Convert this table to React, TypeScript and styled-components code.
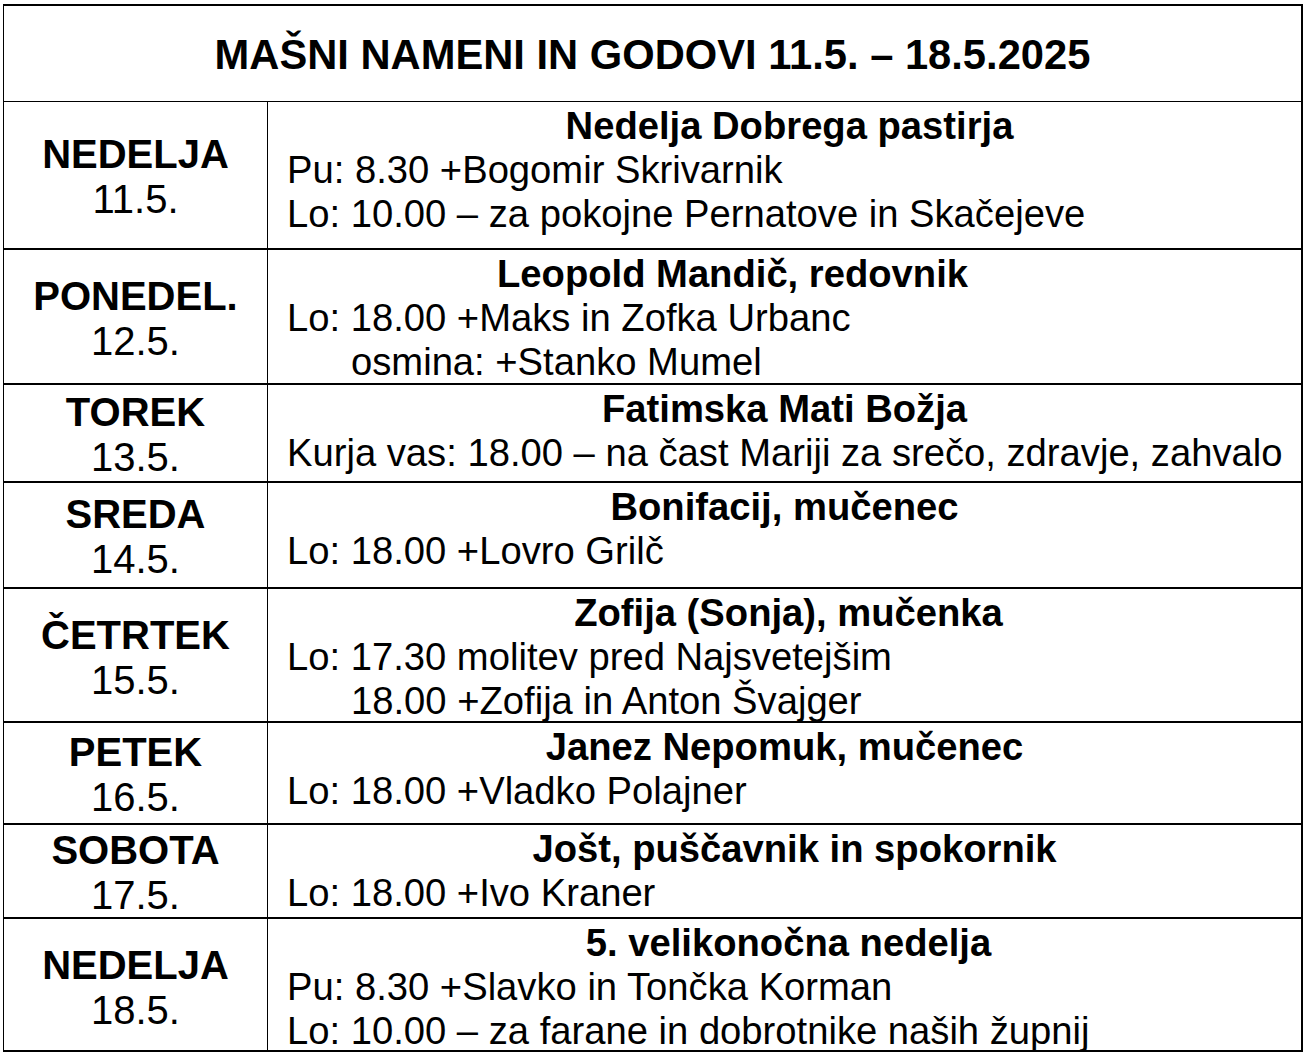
import React from 'react';
import styled, { createGlobalStyle } from 'styled-components';

const GlobalStyle = createGlobalStyle`
	html, body {
		margin: 0;
		padding: 0;
		background: #ffffff;
	}
	body {
		font-family: 'Liberation Sans', Arial, sans-serif;
		color: #000000;
	}
`;

const Page = styled.div`
	padding: 4px 0 0 3px;
`;

const Sheet = styled.div`
	width: 1300px;
	box-sizing: border-box;
	border-top: 2px solid #000;
	border-left: 1px solid #000;
	border-right: 2px solid #000;
`;

const Title = styled.h1`
	margin: 0;
	height: 96px;
	box-sizing: border-box;
	border-bottom: 1px solid #000;
	display: flex;
	align-items: center;
	justify-content: center;
	font-size: 41.7px;
	font-weight: bold;
	padding-top: 2px;
`;

const Row = styled.div<{ $height: number }>`
	display: grid;
	grid-template-columns: 264px 1fr;
	height: ${(p) => p.$height}px;
	box-sizing: border-box;
	border-bottom: 2px solid #000;
`;

const DayCell = styled.div`
	border-right: 1px solid #000;
	display: flex;
	flex-direction: column;
	align-items: center;
	justify-content: center;
	font-size: 40px;
	line-height: 45px;
	padding-top: 3px;
`;

const DayName = styled.div`
	font-weight: bold;
`;

const DayDate = styled.div``;

const InfoCell = styled.div`
	padding: 2px 0 0 19px;
	font-size: 38.2px;
	line-height: 44px;
	white-space: nowrap;
`;

// shift nudges the centred feast title, as the stray spaces in the printed sheet do
const Feast = styled.div<{ $shift: number }>`
	font-weight: bold;
	text-align: center;
	margin-left: -19px;
	padding-left: ${(p) => Math.max(0, p.$shift * 2)}px;
	padding-right: ${(p) => Math.max(0, -p.$shift * 2)}px;
`;

const Line = styled.div<{ $indent?: boolean }>`
	padding-left: ${(p) => (p.$indent ? '64px' : '0')};
`;

type Mass = { text: string; indent?: boolean };

type Day = {
	name: string;
	date: string;
	feast: string;
	shift: number;
	masses: Mass[];
	height: number;
};

const days: Day[] = [
	{
		name: 'NEDELJA',
		date: '11.5.',
		feast: 'Nedelja Dobrega pastirja',
		shift: 5,
		masses: [
			{ text: 'Pu: 8.30 +Bogomir Skrivarnik' },
			{ text: 'Lo: 10.00 – za pokojne Pernatove in Skačejeve' }
		],
		height: 148
	},
	{
		name: 'PONEDEL.',
		date: '12.5.',
		feast: 'Leopold Mandič, redovnik',
		shift: -52,
		masses: [
			{ text: 'Lo: 18.00 +Maks in Zofka Urbanc' },
			{ text: 'osmina: +Stanko Mumel', indent: true }
		],
		height: 135
	},
	{
		name: 'TOREK',
		date: '13.5.',
		feast: 'Fatimska Mati Božja',
		shift: 0,
		masses: [{ text: 'Kurja vas: 18.00 – na čast Mariji za srečo, zdravje, zahvalo' }],
		height: 98
	},
	{
		name: 'SREDA',
		date: '14.5.',
		feast: 'Bonifacij, mučenec',
		shift: 0,
		masses: [{ text: 'Lo: 18.00 +Lovro Grilč' }],
		height: 106
	},
	{
		name: 'ČETRTEK',
		date: '15.5.',
		feast: 'Zofija (Sonja), mučenka',
		shift: 4,
		masses: [
			{ text: 'Lo: 17.30 molitev pred Najsvetejšim' },
			{ text: '18.00 +Zofija in Anton Švajger', indent: true }
		],
		height: 134
	},
	{
		name: 'PETEK',
		date: '16.5.',
		feast: 'Janez Nepomuk, mučenec',
		shift: 0,
		masses: [{ text: 'Lo: 18.00 +Vladko Polajner' }],
		height: 102
	},
	{
		name: 'SOBOTA',
		date: '17.5.',
		feast: 'Jošt, puščavnik in spokornik',
		shift: 10,
		masses: [{ text: 'Lo: 18.00 +Ivo Kraner' }],
		height: 94
	},
	{
		name: 'NEDELJA',
		date: '18.5.',
		feast: '5. velikonočna nedelja',
		shift: 4,
		masses: [
			{ text: 'Pu: 8.30 +Slavko in Tončka Korman' },
			{ text: 'Lo: 10.00 – za farane in dobrotnike naših župnij' }
		],
		height: 133
	}
];

const App: React.FC = () => {
	return (
		<>
			<GlobalStyle />
			<Page>
				<Sheet>
					<Title>MAŠNI NAMENI IN GODOVI 11.5. – 18.5.2025</Title>
					{days.map((day) => (
						<Row key={day.date} $height={day.height}>
							<DayCell>
								<DayName>{day.name}</DayName>
								<DayDate>{day.date}</DayDate>
							</DayCell>
							<InfoCell>
								<Feast $shift={day.shift}>{day.feast}</Feast>
								{day.masses.map((m) => (
									<Line key={m.text} $indent={m.indent}>
										{m.text}
									</Line>
								))}
							</InfoCell>
						</Row>
					))}
				</Sheet>
			</Page>
		</>
	);
};

export default App;
